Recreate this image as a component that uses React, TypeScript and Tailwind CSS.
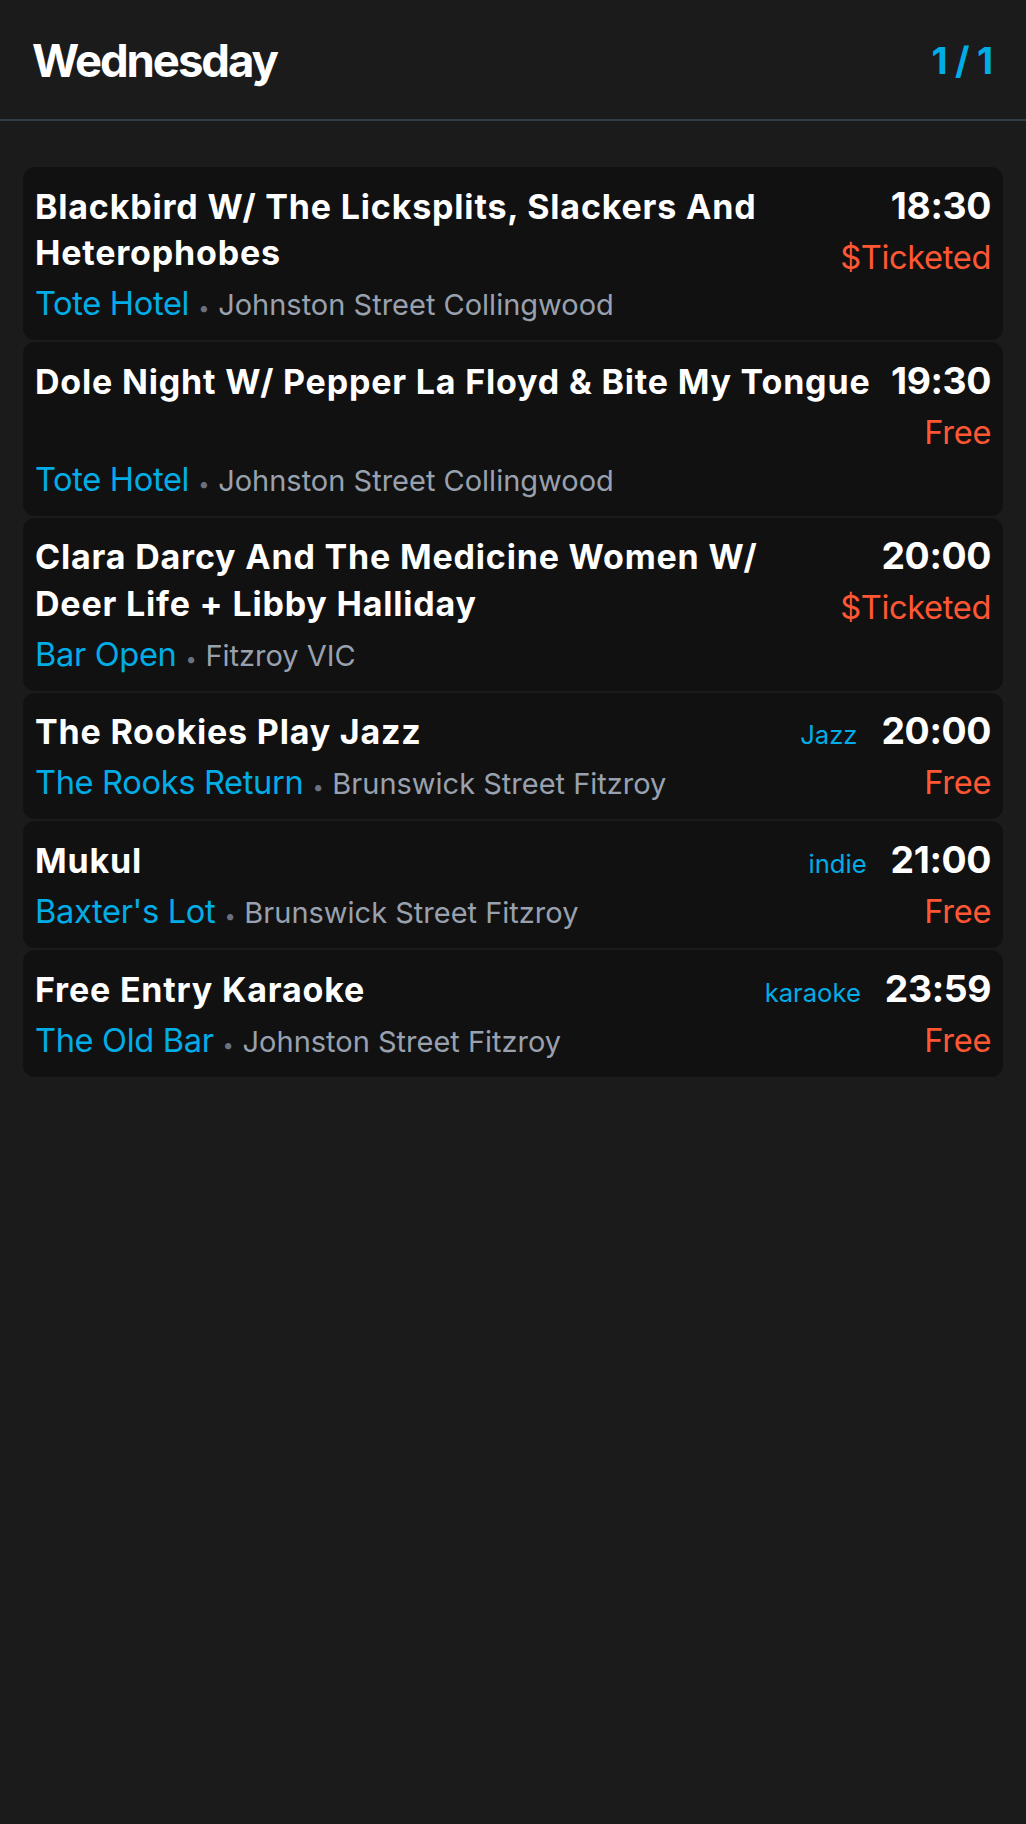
type Gig = {
  title: string
  time: string
  price: string
  venue: string
  area: string
  tag?: string
}

const gigs: Gig[] = [
  {
    title: 'Blackbird W/ The Licksplits, Slackers And Heterophobes',
    time: '18:30',
    price: '$Ticketed',
    venue: 'Tote Hotel',
    area: 'Johnston Street Collingwood',
  },
  {
    title: 'Dole Night W/ Pepper La Floyd & Bite My Tongue',
    time: '19:30',
    price: 'Free',
    venue: 'Tote Hotel',
    area: 'Johnston Street Collingwood',
  },
  {
    title: 'Clara Darcy And The Medicine Women W/ Deer Life + Libby Halliday',
    time: '20:00',
    price: '$Ticketed',
    venue: 'Bar Open',
    area: 'Fitzroy VIC',
  },
  {
    title: 'The Rookies Play Jazz',
    time: '20:00',
    price: 'Free',
    venue: 'The Rooks Return',
    area: 'Brunswick Street Fitzroy',
    tag: 'Jazz',
  },
  {
    title: 'Mukul',
    time: '21:00',
    price: 'Free',
    venue: "Baxter's Lot",
    area: 'Brunswick Street Fitzroy',
    tag: 'indie',
  },
  {
    title: 'Free Entry Karaoke',
    time: '23:59',
    price: 'Free',
    venue: 'The Old Bar',
    area: 'Johnston Street Fitzroy',
    tag: 'karaoke',
  },
]

function Venue({ gig }: { gig: Gig }) {
  return (
    <div className="min-w-0 text-[32.6px] leading-[46.6px] tracking-[-0.01em] whitespace-nowrap">
      <span className="text-[#00ade6]">{gig.venue}</span>
      <span className="mx-[9px] text-[20px] leading-none text-gray-500">•</span>
      <span className="text-[29px] leading-none tracking-normal text-gray-400">{gig.area}</span>
    </div>
  )
}

function GigCard({ gig }: { gig: Gig }) {
  const title = (
    <div className="flex-1 min-w-0 text-[34px] leading-[46.6px] font-bold tracking-[0.024em] text-white">
      {gig.title}
    </div>
  )
  const time = (
    <span className="text-[37.3px] leading-[56px] font-bold tracking-[-0.01em] text-white">{gig.time}</span>
  )
  const price = (
    <span className="text-[32.6px] leading-[46.6px] tracking-[-0.01em] text-[#ff5733] shrink-0">{gig.price}</span>
  )

  if (gig.tag) {
    return (
      <div className="bg-[#111111] rounded-[12px] px-[11.66px] pt-[10.5px] pb-[13.5px]">
        <div className="flex items-baseline justify-between gap-[18px]">
          {title}
          <div className="flex items-baseline gap-[24px] shrink-0">
            <span className="text-[25.6px] text-[#00ade6]">{gig.tag}</span>
            {time}
          </div>
        </div>
        <div className="flex items-baseline justify-between gap-[18px]">
          <Venue gig={gig} />
          {price}
        </div>
      </div>
    )
  }
  return (
    <div className="bg-[#111111] rounded-[12px] px-[11.66px] pt-[10.5px] pb-[13.5px]">
      <div className="flex items-baseline justify-between gap-[18px]">
        {title}
        <div className="flex flex-col items-end shrink-0">
          {time}
          {price}
        </div>
      </div>
      <Venue gig={gig} />
    </div>
  )
}

export default function App() {
  return (
    <main
      className="min-h-screen bg-[#1b1b1b]"
      style={{ fontFamily: 'Inter, "Noto Sans", sans-serif' }}
    >
      <header className="flex items-center justify-between pl-[32px] pr-[33px] pt-[28px] pb-[26px] border-b-2 border-[#343c48]">
        <h1 className="text-[45.5px] leading-[65.3px] font-bold text-white tracking-[-0.045em]">Wednesday</h1>
        <span className="text-[37.3px] leading-[56px] font-bold text-[#00ade6] tracking-[0.2em] -mr-[0.2em]">1/1</span>
      </header>

      <div className="px-[23.3px] pt-[46px] flex flex-col gap-[2px]">
        {gigs.map((gig, i) => (
          <GigCard key={i} gig={gig} />
        ))}
      </div>
    </main>
  )
}
